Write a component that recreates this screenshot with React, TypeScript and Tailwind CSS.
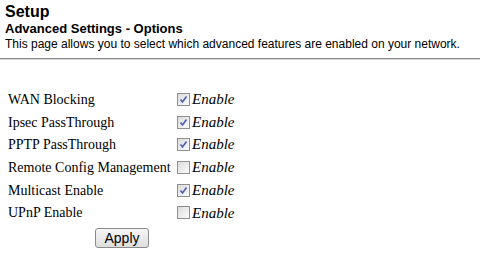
const rows = [
  { label: "WAN Blocking", on: true },
  { label: "Ipsec PassThrough", on: true },
  { label: "PPTP PassThrough", on: true },
  { label: "Remote Config Management", on: false },
  { label: "Multicast Enable", on: true },
  { label: "UPnP Enable", on: false },
];

function Box({ on }: { on: boolean }) {
  return (
    <span className="inline-flex h-[13px] w-[13px] shrink-0 items-center justify-center border border-[#8e8f8f] bg-gradient-to-br from-[#dcdcdc] to-[#fbfbfb]">
      {on && (
        <svg width="9" height="9" viewBox="0 0 9 9">
          <path d="M1.5 4.5 L3.5 7 L7.5 1.5" fill="none" stroke="#4a5fb3" strokeWidth="1.6" />
        </svg>
      )}
    </span>
  );
}

export default function App() {
  return (
    <div className="h-[274px] w-[480px] bg-white text-black">
      <div className="px-[5px] pt-[2px] font-['Liberation_Sans',Arial,sans-serif]">
        <h1 className="text-[16px] font-bold leading-[19px]">Setup</h1>
        <h2 className="text-[13px] font-bold leading-[15px]">Advanced Settings - Options</h2>
        <p className="text-[12px] leading-[17px]">
          This page allows you to select which advanced features are enabled on your network.
        </p>
      </div>
      <div className="mt-[5px] h-[2px] border-t border-[#8a8a8a] bg-[#d8d8d8]" />
      <div className="pl-[8px] pt-[28px] font-['Liberation_Serif','Times_New_Roman',serif]">
        {rows.map((r) => (
          <div key={r.label} className="flex h-[22.7px] items-center whitespace-nowrap">
            <span className="w-[169px] shrink-0 text-[14px]">{r.label}</span>
            <Box on={r.on} />
            <span className="ml-[2px] text-[15px] italic">Enable</span>
          </div>
        ))}
        <div className="flex w-[228px] justify-center pt-[4px]">
          <button className="h-[20px] rounded-[3px] border border-[#8a8a8a] bg-gradient-to-b from-[#f6f6f6] to-[#dedede] px-[8px] font-['Liberation_Sans',Arial,sans-serif] text-[14px] leading-[16px]">
            Apply
          </button>
        </div>
      </div>
    </div>
  );
}
